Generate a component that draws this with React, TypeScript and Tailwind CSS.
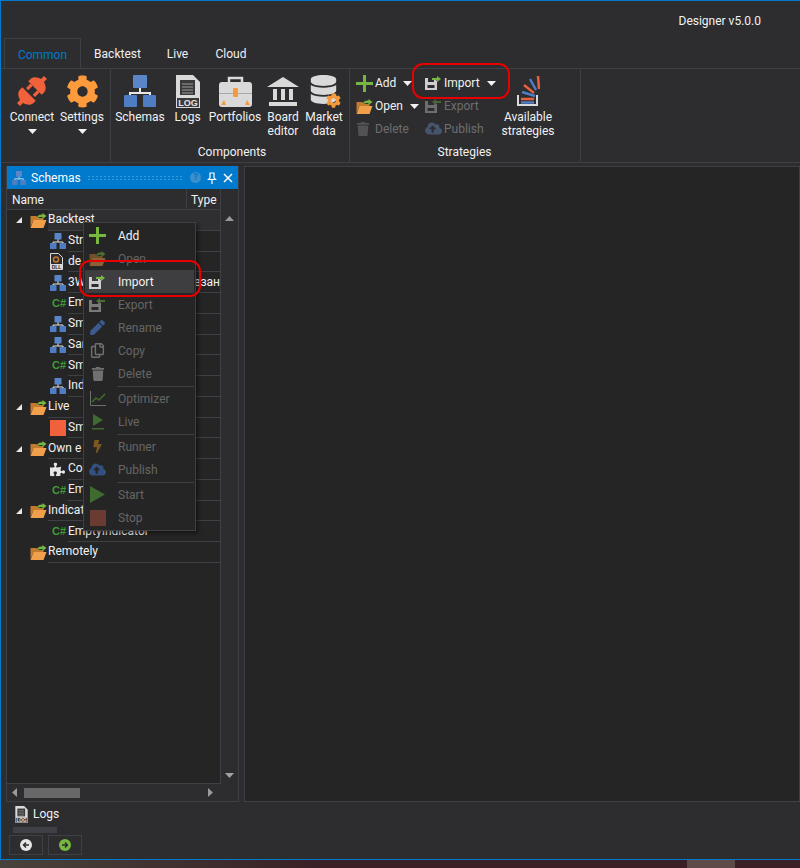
import React from "react";
import { FaCog, FaDatabase, FaPuzzlePiece, FaTrash, FaPen, FaRegCopy, FaCloudUploadAlt, FaBolt } from "react-icons/fa";

const Caret = ({ className = "" }: { className?: string }) => (
  <svg width="9" height="5" viewBox="0 0 9 5" className={className}>
    <polygon points="0,0 9,0 4.5,5" fill="#f1f1f1" />
  </svg>
);

const SchemaIcon = ({ size = 16 }: { size?: number }) => (
  <svg width={size} height={size} viewBox="0 0 32 32">
    <path d="M16 12v6M6 24v-6h20v6" stroke="#e8e8e8" strokeWidth="2" fill="none" />
    <rect x="9" y="0" width="14" height="13" rx="1" fill="#5a86c8" />
    <rect x="0" y="20" width="13" height="12" rx="1" fill="#4f7dc4" />
    <rect x="19" y="20" width="13" height="12" rx="1" fill="#4f7dc4" />
  </svg>
);

const PlugIcon = () => (
  <svg width="36" height="36" viewBox="0 0 34 34">
    <g fill="#f1613c" transform="rotate(-45 17 17)">
      <path d="M13 8v18h-3c-4 0-6-4-7-7H-1v-4h4c1-3 3-7 7-7z" />
      <path d="M21 8v18h3c4 0 6-4 7-7h4v-4h-4c-1-3-3-7-7-7z" />
      <path d="M15 11h6v3h-6zM15 20h6v3h-6z" />
    </g>
  </svg>
);

const LogIcon = ({ big = true }: { big?: boolean }) => (
  <svg width={big ? 24 : 13} height={big ? 33 : 17} viewBox="0 0 24 33">
    <path d="M0 0h17l7 7v26H0z" fill="#d9d9d9" />
    <rect x="4" y="5" width="15" height="15" fill="#3a3a3c" />
    <path d="M6 9h11M6 12h11M6 15h11M6 18h11" stroke="#9a9a9a" strokeWidth="1" />
    <rect x="1" y="23" width="22" height="9" fill="#3a3a3c" />
    <text x="12" y="31" textAnchor="middle" fontSize="9" fontWeight="700" fill="#e6e6e6" fontFamily="Liberation Sans, sans-serif">LOG</text>
  </svg>
);

const CaseIcon = () => (
  <svg width="33" height="31" viewBox="0 0 33 31">
    <path d="M10 6V2h13v4" stroke="#d9d9d9" strokeWidth="2.5" fill="none" />
    <rect x="0" y="6" width="33" height="25" rx="3" fill="#d9d9d9" />
    <rect x="0" y="17" width="33" height="1" fill="#a9a9a9" />
    <rect x="14" y="12" width="5" height="9" rx="1" fill="#f59a3c" />
    <path d="M2 29l3-5 2 5zM31 29l-3-5-2 5z" fill="#f59a3c" />
  </svg>
);

const BankIcon = () => (
  <svg width="32" height="29" viewBox="0 0 32 29">
    <path d="M16 0L32 10H0z" fill="#d9d9d9" />
    <path d="M6 12h4v11H6zM14 12h4v11h-4zM22 12h4v11h-4z" fill="#d9d9d9" />
    <rect x="2" y="25" width="28" height="4" fill="#d9d9d9" />
  </svg>
);

const MarketIcon = () => (
  <div className="relative w-[30px] h-[32px]">
    <FaDatabase size={29} color="#d9d9d9" />
    <FaCog size={15} color="#f59a3c" className="absolute right-[-2px] bottom-[-1px]" />
  </div>
);

const StackIcon = () => (
  <svg width="23" height="30" viewBox="0 0 23 30">
    <path d="M1 19v10h19V19" stroke="#d9d9d9" strokeWidth="2" fill="none" />
    <path d="M4 26.5h13" stroke="#4f7dc4" strokeWidth="2.5" />
    <path d="M4 23h13" stroke="#e8603c" strokeWidth="2.5" />
    <path d="M5 16l13 4" stroke="#4f7dc4" strokeWidth="2.5" />
    <path d="M7 9l10 8" stroke="#e8603c" strokeWidth="2.5" />
    <path d="M13 3l6 11" stroke="#4f7dc4" strokeWidth="2.5" />
    <path d="M21 0l1 13" stroke="#e8603c" strokeWidth="2.5" />
  </svg>
);

const PlusIcon = ({ size = 17 }: { size?: number }) => (
  <svg width={size} height={size} viewBox="0 0 17 17">
    <path d="M7 0h3v7h7v3h-7v7H7v-7H0V7h7z" fill="#76b83f" />
  </svg>
);

const FolderIcon = ({ className = "" }: { className?: string }) => (
  <svg width="17" height="15" viewBox="0 0 16 15" className={className}>
    <path d="M0 3h6l1 2h6v2H3L0 14z" fill="#c47a2c" />
    <path d="M3 7h13l-3 8H0z" fill="#f0a04b" />
    <path d="M6 6c1-4 3-4.500 6-4.500V0l4 3-4 3V4C10 4 8 4 6 6z" fill="#76b83f" />
  </svg>
);

const SaveIcon = ({ out = false, className = "" }: { out?: boolean; className?: string }) => (
  <svg width="17" height="14" viewBox="0 0 17 14" className={className}>
    <path d="M0 2h3v4h6V3.500h1l2 1.500v9H0z" fill="#cfcfcf" />
    <rect x="2.500" y="9" width="7" height="3" fill="#2d2d30" />
    <path d={out ? "M16 2H11V0L7 3l4 3V4h5z" : "M7 2h5V0l4 3-4 3V4H7z"} fill="#76b83f" />
  </svg>
);

const CSharp = () => (
  <span className="text-[11px] leading-none font-bold text-[#3f9b35] font-['Liberation_Sans',sans-serif] w-[16px] pl-[2px]">C#</span>
);

const DllIcon = () => (
  <svg width="13" height="17" viewBox="0 0 13 17">
    <path d="M.5.5h8l4 4v12H.5z" fill="#2d2d30" stroke="#d9d9d9" />
    <circle cx="6" cy="6.500" r="2.500" fill="none" stroke="#c47a2c" strokeWidth="1.500" />
    <rect x="1" y="11" width="11" height="5" fill="#d9d9d9" />
    <text x="6.500" y="15.500" textAnchor="middle" fontSize="5" fontWeight="700" fill="#2d2d30" fontFamily="Liberation Sans, sans-serif">DLL</text>
  </svg>
);

const Triangle = () => (
  <svg width="6" height="6" viewBox="0 0 6 6">
    <polygon points="6,0 6,6 0,6" fill="#e6e6e6" />
  </svg>
);

type LargeProps = { w: string; icon: React.ReactNode; label: React.ReactNode; caret?: boolean };

const LargeButton = ({ w, icon, label, caret }: LargeProps) => (
  <div className={`${w} shrink-0 flex flex-col items-center pt-[5px]`}>
    <div className="h-[34px] flex items-center justify-center">{icon}</div>
    <div className="mt-[2px] text-center leading-[14px] whitespace-nowrap">{label}</div>
    {caret && <Caret className="mt-[5px]" />}
  </div>
);

const SmallButton = ({ icon, label, dim, caret }: { icon: React.ReactNode; label: string; dim?: boolean; caret?: boolean }) => (
  <div className="h-[22.75px] flex items-center">
    <div className={`w-[19px] flex justify-start ${dim ? "opacity-40" : ""}`}>{icon}</div>
    <span className={dim ? "text-[#6d6d6d]" : ""}>{label}</span>
    {caret && <Caret className="ml-[7px]" />}
  </div>
);

const rows: { level: number; icon: React.ReactNode; text: string; arrow?: boolean; type?: string; active?: boolean }[] = [
  { level: 0, icon: <FolderIcon />, text: "Backtest", arrow: true, active: true },
  { level: 1, icon: <SchemaIcon />, text: "Str" },
  { level: 1, icon: <DllIcon />, text: "de" },
  { level: 1, icon: <SchemaIcon />, text: "3W", type: "-езан" },
  { level: 1, icon: <CSharp />, text: "Em" },
  { level: 1, icon: <SchemaIcon />, text: "Sm" },
  { level: 1, icon: <SchemaIcon />, text: "San" },
  { level: 1, icon: <CSharp />, text: "Sm" },
  { level: 1, icon: <SchemaIcon />, text: "Ind" },
  { level: 0, icon: <FolderIcon />, text: "Live", arrow: true },
  { level: 1, icon: <span className="block w-[16px] h-[16px] bg-[#f1613c]" />, text: "Sm" },
  { level: 0, icon: <FolderIcon />, text: "Own e", arrow: true },
  { level: 1, icon: <FaPuzzlePiece size={15} color="#e6e6e6" />, text: "Co" },
  { level: 1, icon: <CSharp />, text: "Em" },
  { level: 0, icon: <FolderIcon />, text: "Indicat", arrow: true },
  { level: 1, icon: <CSharp />, text: "EmptyIndicator" },
  { level: 0, icon: <FolderIcon />, text: "Remotely" },
];

const TreeRow = ({ level, icon, text, arrow, type, active }: (typeof rows)[number]) => (
  <div className="h-[20.75px] flex items-stretch">
    <div className={`flex items-center shrink-0 ${level === 0 ? "w-[41px] pl-[9px]" : "w-[61px] pl-[43px]"}`}>
      {level === 0 ? (
        <>
          <div className="w-[14px]">{arrow && <Triangle />}</div>
          {icon}
        </>
      ) : (
        icon
      )}
    </div>
    <div className={`flex-1 min-w-0 flex items-center pb-[1px] border-b border-[#3f3f46] overflow-hidden whitespace-nowrap ${active ? "bg-[#2f2f31]" : ""}`}>
      <span className="text-[#f1f1f1]">{text}</span>
      {type && <span className="text-[#f1f1f1] ml-auto">{type}</span>}
    </div>
  </div>
);

type MenuEntry = { icon?: React.ReactNode; label?: string; on?: boolean; hover?: boolean };

const menu: MenuEntry[] = [
  { icon: <PlusIcon size={17} />, label: "Add", on: true },
  { icon: <FolderIcon className="opacity-50" />, label: "Open" },
  { icon: <SaveIcon />, label: "Import", on: true, hover: true },
  { icon: <SaveIcon out className="opacity-50" />, label: "Export" },
  { icon: <FaPen size={15} color="#3c5a8c" />, label: "Rename" },
  { icon: <FaRegCopy size={15} color="#707070" />, label: "Copy" },
  { icon: <FaTrash size={14} color="#707070" />, label: "Delete" },
  {},
  {
    icon: (
      <svg width="16" height="15" viewBox="0 0 16 15">
        <path d="M.5 0v14.500H16" stroke="#707070" fill="none" />
        <path d="M2 11l4-4 3 2 6-6" stroke="#3f6b30" strokeWidth="1.500" fill="none" />
      </svg>
    ),
    label: "Optimizer",
  },
  {
    icon: (
      <svg width="14" height="16" viewBox="0 0 14 16">
        <polygon points="2,0 12,6 2,12" fill="#3f6b30" />
        <rect x="1" y="14" width="12" height="1.500" fill="#3f6b30" />
      </svg>
    ),
    label: "Live",
  },
  {},
  { icon: <FaBolt size={13} color="#7a5a22" />, label: "Runner" },
  { icon: <FaCloudUploadAlt size={17} color="#34507f" />, label: "Publish" },
  {},
  {
    icon: (
      <svg width="15" height="17" viewBox="0 0 15 17">
        <polygon points="0,0 15,8.500 0,17" fill="#3f6b30" />
      </svg>
    ),
    label: "Start",
  },
  { icon: <span className="block w-[16px] h-[16px] bg-[#6b3a30]" />, label: "Stop" },
];

export default function App() {
  return (
    <div className="w-[800px] h-[868px] flex flex-col overflow-hidden font-['Roboto',sans-serif] text-[12px] text-[#f1f1f1] bg-[#3a2026]">
      <div className="relative h-[860px] flex flex-col bg-[#2d2d30] border-l border-t border-b border-[#007acc]">
        {/* title */}
        <div className="h-[37px] flex items-end justify-end pr-[39px] pb-[8px]">Designer v5.0.0</div>

        {/* tabs */}
        <div className="h-[30px] flex items-stretch pl-[3px]">
          <div className="w-[77px] flex items-center justify-center pt-[2px] border border-b-0 border-[#3f3f46] text-[#007acc]">Common</div>
          <div className="w-[73px] flex items-center justify-center pt-[2px]">Backtest</div>
          <div className="w-[47px] flex items-center justify-center pt-[2px]">Live</div>
          <div className="w-[60px] flex items-center justify-center pt-[2px]">Cloud</div>
        </div>

        {/* ribbon */}
        <div className="h-[95px] flex border-t border-b border-[#3f3f46]">
          <div className="w-[110px] shrink-0 pl-[6px] flex border-r border-[#3f3f46]">
            <LargeButton w="w-[50px]" icon={<PlugIcon />} label="Connect" caret />
            <LargeButton w="w-[50px]" icon={<FaCog size={33} color="#fc9a3c" />} label="Settings" caret />
          </div>
          <div className="w-[239px] shrink-0 flex flex-col border-r border-[#3f3f46] pl-[4px]">
            <div className="flex-1 flex">
              <LargeButton w="w-[50px]" icon={<SchemaIcon size={32} />} label="Schemas" />
              <LargeButton w="w-[45px]" icon={<LogIcon />} label="Logs" />
              <LargeButton w="w-[50px]" icon={<CaseIcon />} label="Portfolios" />
              <LargeButton w="w-[46px]" icon={<BankIcon />} label={<>Board<br />editor</>} />
              <LargeButton w="w-[36px]" icon={<MarketIcon />} label={<>Market<br />data</>} />
            </div>
            <div className="h-[19px] text-center">Components</div>
          </div>
          <div className="w-[231px] shrink-0 flex flex-col border-r border-[#3f3f46]">
            <div className="flex-1 flex pl-[6px]">
              <div className="w-[69px] pt-[3px]">
                <SmallButton icon={<PlusIcon />} label="Add" caret />
                <SmallButton icon={<FolderIcon />} label="Open" caret />
                <SmallButton icon={<FaTrash size={14} color="#8a8a8a" />} label="Delete" dim />
              </div>
              <div className="w-[78px] pt-[3px]">
                <SmallButton icon={<SaveIcon />} label="Import" caret />
                <SmallButton icon={<SaveIcon out />} label="Export" dim />
                <SmallButton icon={<FaCloudUploadAlt size={17} color="#6d8fc9" />} label="Publish" dim />
              </div>
              <LargeButton w="w-[50px]" icon={<StackIcon />} label={<>Available<br />strategies</>} />
            </div>
            <div className="h-[19px] text-center pr-[1px]">Strategies</div>
          </div>
        </div>

        {/* dock area */}
        <div className="flex-1 flex gap-[5px] pl-[5px] pt-[3px] min-h-0">
          <div className="w-[233px] h-[636px] flex flex-col border border-[#3f3f46] border-t-0">
            <div className="h-[23px] bg-[#007acc] flex items-center pl-[5px] pr-[5px]">
              <SchemaIcon size={14} />
              <span className="ml-[5px] text-white">Schemas</span>
              <div className="flex-1 mx-[6px] h-[5px] bg-[radial-gradient(#3b9bdb_1px,transparent_1px)] bg-[length:4px_3px]" />
              <span className="w-[11px] h-[11px] rounded-full bg-[#3b8fcb] text-[#007acc] text-[9px] leading-[11px] font-bold text-center">?</span>
              <svg width="10" height="12" viewBox="0 0 10 12" className="ml-[6px]">
                <path d="M3 1h4v5l1.500 1.500h-7L3 6zM5 8v4" stroke="#fff" fill="none" strokeWidth="1.200" />
              </svg>
              <svg width="10" height="10" viewBox="0 0 10 10" className="ml-[6px]">
                <path d="M1 1l8 8M9 1l-8 8" stroke="#fff" strokeWidth="1.500" />
              </svg>
            </div>
            <div className="flex-1 flex min-h-0">
              <div className="flex-1 min-w-0 flex flex-col bg-[#252526] border-r border-b border-[#3f3f46]">
                <div className="h-[21px] flex items-center bg-[#2d2d30] border-b border-[#3f3f46]">
                  <span className="w-[180px] pl-[5px] pt-px border-r border-[#3f3f46] h-full flex items-center">Name</span>
                  <span className="pl-[4px] pt-px">Type</span>
                </div>
                <div className="flex-1 flex flex-col">
                  {rows.map((row, i) => (
                    <TreeRow key={i} {...row} />
                  ))}
                </div>
              </div>
              <div className="w-[17px] shrink-0 flex flex-col items-center py-[6px]">
                <div className="h-[21px]" />
                <svg width="9" height="5" viewBox="0 0 9 5"><polygon points="0,5 9,5 4.500,0" fill="#999" /></svg>
                <div className="flex-1" />
                <Caret className="opacity-60" />
              </div>
            </div>
            <div className="h-[17px] flex items-center pl-[5px] pr-[25px]">
              <svg width="5" height="9" viewBox="0 0 5 9"><polygon points="5,0 5,9 0,4.500" fill="#999" /></svg>
              <div className="w-[56px] h-[10px] bg-[#686868] ml-[7px]" />
              <div className="flex-1" />
              <svg width="5" height="9" viewBox="0 0 5 9"><polygon points="0,0 0,9 5,4.500" fill="#999" /></svg>
            </div>
          </div>
          <div className="flex-1 h-[636px] bg-[#252526] border border-[#3f3f46]" />
        </div>

        {/* logs */}
        <div className="h-[58px] flex flex-col pl-[8px]">
          <div className="h-[26px] flex items-center pl-[6px] text-[#f1f1f1]">
            <LogIcon big={false} />
            <span className="ml-[5px]">Logs</span>
          </div>
          <div className="w-[44px] h-[6px] ml-[4px] bg-[#3f3f46]" />
          <div className="flex gap-[5px] mt-[2px]">
            <div className="w-[34px] h-[20px] border border-[#3f3f46] flex items-center justify-center">
              <svg width="12" height="12" viewBox="0 0 12 12">
                <circle cx="6" cy="6" r="6" fill="#e6e6e6" />
                <path d="M9 6H4M6 3.500L3.500 6 6 8.500" stroke="#2d2d30" strokeWidth="1.500" fill="none" />
              </svg>
            </div>
            <div className="w-[34px] h-[20px] border border-[#3f3f46] flex items-center justify-center">
              <svg width="12" height="12" viewBox="0 0 12 12">
                <circle cx="6" cy="6" r="6" fill="#76b83f" />
                <path d="M3 6h5M6 3.500L8.500 6 6 8.500" stroke="#2d2d30" strokeWidth="1.500" fill="none" />
              </svg>
            </div>
          </div>
        </div>

        {/* context menu */}
        <div className="absolute left-[82px] top-[221px] w-[113px] bg-[#252526] border border-[#3f3f46] shadow-[2px_2px_4px_rgba(0,0,0,0.5)] p-px">
          {menu.map((item, i) =>
            item.label ? (
              <div key={i} className={`h-[23px] flex items-center ${item.hover ? "bg-[#3e3e40]" : ""}`}>
                <div className="w-[33px] pr-[8px] flex justify-center shrink-0">{item.icon}</div>
                <span className={item.on ? "text-[#f1f1f1]" : "text-[#656565]"}>{item.label}</span>
              </div>
            ) : (
              <div key={i} className="h-[2px] ml-[32px] border-b border-[#3f3f46]" />
            )
          )}
        </div>

        {/* red annotations */}
        <div className="absolute left-[411px] top-[62px] w-[98px] h-[36px] border-2 border-[#e60000] rounded-[11px]" />
        <div className="absolute left-[78px] top-[259px] w-[122px] h-[37px] border-2 border-[#e60000] rounded-[11px]" />
      </div>
      <div className="flex-1 flex bg-[linear-gradient(to_right,#47423a,#3a2026_40%)]">
        <div className="w-[687px]" />
        <div className="w-[48px] bg-[#5f4a4a]" />
      </div>
    </div>
  );
}
